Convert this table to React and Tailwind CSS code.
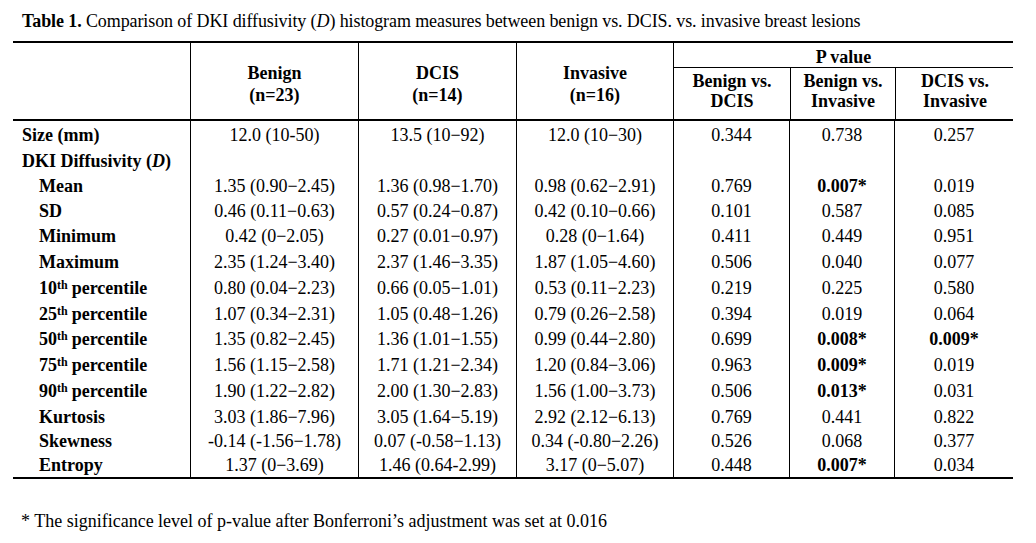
import React from 'react';

const grid = 'grid grid-cols-[177px_168px_158px_157px_116px_105px_119px]';

const Th = ({ n }) => (
  <>
    {n}
    <sup className="text-[12px] relative -top-[3px] mr-[4px]">th</sup>
    {' '}percentile
  </>
);

const rows = [
  { label: 'Size (mm)', h: 'h-[27px]', v: ['12.0 (10-50)', '13.5 (10−92)', '12.0 (10−30)', '0.344', '0.738', '0.257'] },
  { label: <>DKI Diffusivity (<i>D</i>)</>, h: 'h-[26px]', v: ['', '', '', '', '', ''] },
  { label: 'Mean', sub: true, h: 'h-[24px]', v: ['1.35 (0.90−2.45)', '1.36 (0.98−1.70)', '0.98 (0.62−2.91)', '0.769', '0.007*', '0.019'], b: [4] },
  { label: 'SD', sub: true, h: 'h-[25px]', v: ['0.46 (0.11−0.63)', '0.57 (0.24−0.87)', '0.42 (0.10−0.66)', '0.101', '0.587', '0.085'] },
  { label: 'Minimum', sub: true, h: 'h-[26px]', v: ['0.42 (0−2.05)', '0.27 (0.01−0.97)', '0.28 (0−1.64)', '0.411', '0.449', '0.951'] },
  { label: 'Maximum', sub: true, h: 'h-[26px]', v: ['2.35 (1.24−3.40)', '2.37 (1.46−3.35)', '1.87 (1.05−4.60)', '0.506', '0.040', '0.077'] },
  { label: <Th n="10" />, sub: true, h: 'h-[26px]', v: ['0.80 (0.04−2.23)', '0.66 (0.05−1.01)', '0.53 (0.11−2.23)', '0.219', '0.225', '0.580'] },
  { label: <Th n="25" />, sub: true, h: 'h-[25px]', v: ['1.07 (0.34−2.31)', '1.05 (0.48−1.26)', '0.79 (0.26−2.58)', '0.394', '0.019', '0.064'] },
  { label: <Th n="50" />, sub: true, h: 'h-[26px]', v: ['1.35 (0.82−2.45)', '1.36 (1.01−1.55)', '0.99 (0.44−2.80)', '0.699', '0.008*', '0.009*'], b: [4, 5] },
  { label: <Th n="75" />, sub: true, h: 'h-[26px]', v: ['1.56 (1.15−2.58)', '1.71 (1.21−2.34)', '1.20 (0.84−3.06)', '0.963', '0.009*', '0.019'], b: [4] },
  { label: <Th n="90" />, sub: true, h: 'h-[26px]', v: ['1.90 (1.22−2.82)', '2.00 (1.30−2.83)', '1.56 (1.00−3.73)', '0.506', '0.013*', '0.031'], b: [4] },
  { label: 'Kurtosis', sub: true, h: 'h-[25px]', v: ['3.03 (1.86−7.96)', '3.05 (1.64−5.19)', '2.92 (2.12−6.13)', '0.769', '0.441', '0.822'] },
  { label: 'Skewness', sub: true, h: 'h-[24px]', v: ['-0.14 (-1.56−1.78)', '0.07 (-0.58−1.13)', '0.34 (-0.80−2.26)', '0.526', '0.068', '0.377'] },
  { label: 'Entropy', sub: true, h: 'h-[24px]', v: ['1.37 (0−3.69)', '1.46 (0.64-2.99)', '3.17 (0−5.07)', '0.448', '0.007*', '0.034'], b: [4] },
];

export default function App() {
  return (
    <div className="w-[1036px] h-[543px] bg-white text-black font-['Liberation_Serif',serif] overflow-hidden">
      <div className="pl-[22px] pt-[10px] h-[41px] text-[18px] leading-[22px] tracking-[-0.1px]">
        <b>Table 1.</b> Comparison of DKI diffusivity (<i>D</i>) histogram measures between benign vs. DCIS. vs. invasive breast lesions
      </div>

      <div className="ml-[13px] w-[1000px] border-t-2 border-b-2 border-black text-[18px]">
        {/* header */}
        <div className={`${grid} h-[78px] border-b-2 border-black font-bold leading-[22px]`}>
          <div />
          <div className="border-l border-black flex flex-col items-center justify-center text-center pt-[5px]">
            <span>Benign</span>
            <span>(n=23)</span>
          </div>
          <div className="border-l border-black flex flex-col items-center justify-center text-center pt-[5px]">
            <span>DCIS</span>
            <span>(n=14)</span>
          </div>
          <div className="border-l border-black flex flex-col items-center justify-center text-center pt-[5px]">
            <span>Invasive</span>
            <span>(n=16)</span>
          </div>
          <div className="col-span-3 border-l border-black flex flex-col">
            <div className="h-[25px] border-b border-black flex items-center justify-center pt-[3px]">P value</div>
            <div className="flex-1 grid grid-cols-[116px_105px_119px] leading-[20px]">
              <div className="flex flex-col items-center justify-center text-center pb-[6px]">
                <span>Benign vs.</span>
                <span>DCIS</span>
              </div>
              <div className="border-l border-black flex flex-col items-center justify-center text-center pb-[6px]">
                <span>Benign vs.</span>
                <span>Invasive</span>
              </div>
              <div className="border-l border-black flex flex-col items-center justify-center text-center pb-[6px]">
                <span>DCIS vs.</span>
                <span>Invasive</span>
              </div>
            </div>
          </div>
        </div>

        {/* body */}
        {rows.map((r, i) => (
          <div key={i} className={`${grid} ${r.h} leading-none`}>
            <div className={`flex items-center font-bold whitespace-nowrap ${r.sub ? 'pl-[26px]' : 'pl-[9px]'}`}>{r.label}</div>
            {r.v.map((val, j) => (
              <div
                key={j}
                className={`border-l border-black flex items-center justify-center ${r.b && r.b.includes(j) ? 'font-bold' : ''}`}
              >
                {val}
              </div>
            ))}
          </div>
        ))}
      </div>

      <div className="pl-[21px] pt-[31px] text-[18px] leading-[22px]">
        * The significance level of p-value after Bonferroni’s adjustment was set at 0.016
      </div>
    </div>
  );
}
